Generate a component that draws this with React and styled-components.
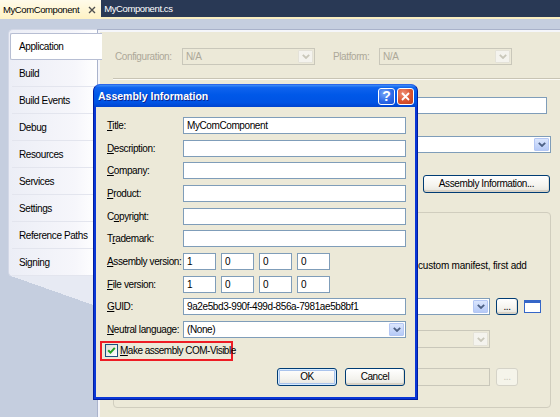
import React from "react";
import styled, { createGlobalStyle, css } from "styled-components";

const GlobalStyle = createGlobalStyle`
  *, *::before, *::after { box-sizing: border-box; }
  html, body { margin: 0; padding: 0; }
  body {
    width: 560px;
    height: 417px;
    overflow: hidden;
    background: #c5cedf;
    font-family: "Liberation Sans", Arial, sans-serif;
    font-size: 10px;
    letter-spacing: -0.4px;
    color: #000;
  }
`;

const Screen = styled.div`
  position: relative;
  width: 560px;
  height: 417px;
  overflow: hidden;
  display: flex;
  flex-direction: column;
`;

/* ---------- document tabs ---------- */

const DocTabs = styled.div`
  height: 19px;
  flex: none;
  display: flex;
  align-items: flex-start;
  background: #293955;
  border-bottom: 2px solid #f9eec2;
`;

const DocTab = styled.div`
  display: flex;
  align-items: center;
  gap: 9px;
  height: ${({ $active }) => ($active ? "19px" : "17px")};
  padding: 0 5px 0 3px;
  font-size: 9.5px;
  color: ${({ $active }) => ($active ? "#000" : "#fff")};
  background: ${({ $active }) =>
    $active ? "linear-gradient(#fffbea, #fff2c4)" : "transparent"};
`;

/* ---------- property page frame ---------- */

const Workspace = styled.div`
  flex: 1;
  display: flex;
  padding: 10px 0 0 8px;
  min-height: 0;
`;

const Sidebar = styled.nav`
  position: relative;
  z-index: 1;
  width: 89px;
  flex: none;
  align-self: flex-start;
  padding-top: 3px;
  background: linear-gradient(to right, #eceef6, #f6f6fb 75%, #ffffff);
  border: 1px solid #d3d8e7;
  border-right: none;
  border-radius: 5px 0 0 5px;

  &::after {
    content: "";
    position: absolute;
    left: 2px;
    top: 100%;
    width: 85px;
    height: 30px;
    background: linear-gradient(to top right, transparent 50%, #e7eaf3 50%);
  }
`;

const NavItem = styled.div`
  height: 27px;
  display: flex;
  align-items: center;
  padding-left: 7px;
  margin-left: 3px;
  border-bottom: 1px solid #e3e5ee;
  white-space: nowrap;

  ${({ $active }) =>
    $active &&
    css`
      margin-left: 1px;
      margin-right: -5px;
      padding-left: 8px;
      background: #fff;
      border: 1px solid #b7bed3;
      border-right: none;
      border-radius: 2px 0 0 2px;
    `}
`;

const Page = styled.main`
  flex: 1;
  min-width: 0;
  padding-left: 15px;
  background: #ece9d8;
  border-left: 1px solid #aab3cc;
  border-top: 1px solid #a9b2ca;
  box-shadow: inset 2px 2px 0 #f5f6fa;
`;

const ConfigRow = styled.div`
  display: flex;
  align-items: center;
  margin-top: 18px;
  padding-left: 2px;
  height: 17px;
  color: #aca899;
`;

const ConfigLabel = styled.span`
  width: ${({ $w }) => $w}px;
  flex: none;
`;

const Spacer = styled.span`
  width: ${({ $w }) => $w}px;
  flex: none;
`;

const Separator = styled.div`
  margin-top: 13px;
  border-top: 1px solid #c8c4b4;
  border-bottom: 1px solid #fbfaf5;
`;

const RightStack = styled.div`
  display: flex;
  flex-direction: column;
  align-items: flex-end;
  padding-right: 9px;
`;

const GroupBox = styled.section`
  margin: 19px 9px 0 0;
  padding: 47px 9px 21px 0;
  border: 1px solid #d0cdbe;
  border-radius: 4px;
`;

const Note = styled.p`
  margin: 0 0 26px;
  padding-left: 304px;
  line-height: 12px;
  letter-spacing: -0.2px;
  white-space: nowrap;
`;

const PickRow = styled.div`
  display: grid;
  grid-template-columns: 1fr 22px 17px;
  column-gap: 6px;
  align-items: center;
  margin-bottom: ${({ $gap }) => $gap}px;
`;

/* ---------- controls ---------- */

const TextBox = styled.div`
  height: ${({ $h }) => $h || 17}px;
  width: ${({ $w }) => ($w ? `${$w}px` : "auto")};
  margin-right: ${({ $mr }) => $mr || 0}px;
  justify-self: ${({ $w }) => ($w ? "end" : "stretch")};
  padding: 0 3px;
  line-height: 15px;
  white-space: nowrap;
  overflow: hidden;
  border: 1px solid ${({ $disabled }) => ($disabled ? "#c9c7ba" : "#7f9db9")};
  background: ${({ $disabled }) => ($disabled ? "#ece9d8" : "#fff")};
`;

const Combo = styled.div`
  display: flex;
  height: ${({ $h }) => $h || 17}px;
  width: ${({ $w }) => ($w ? `${$w}px` : "auto")};
  justify-self: ${({ $w }) => ($w ? "end" : "stretch")};
  padding: 1px;
  border: 1px solid ${({ $disabled }) => ($disabled ? "#c9c7ba" : "#7f9db9")};
  background: ${({ $disabled }) => ($disabled ? "#ece9d8" : "#fff")};
  color: ${({ $disabled }) => ($disabled ? "#aca899" : "#000")};
`;

const ComboText = styled.span`
  flex: 1;
  padding-left: 2px;
  line-height: 13px;
  white-space: nowrap;
  overflow: hidden;
`;

const DropButton = styled.span`
  width: 15px;
  flex: none;
  display: flex;
  align-items: center;
  justify-content: center;
  border-radius: 1px;
  border: 1px solid ${({ $disabled }) => ($disabled ? "#e4e2d8" : "#b4c7f4")};
  background: ${({ $disabled }) =>
    $disabled ? "#f4f3ee" : "linear-gradient(#dbe6fd, #b6caf7)"};
`;

const Chevron = ({ disabled }) => (
  <svg width="8" height="5" viewBox="0 0 8 5">
    <polyline
      points="0.8,0.8 4,4 7.2,0.8"
      fill="none"
      stroke={disabled ? "#c9c7ba" : "#4d6185"}
      strokeWidth="1.8"
    />
  </svg>
);

const DropDown = ({ value, disabled, w, h }) => (
  <Combo $disabled={disabled} $w={w} $h={h}>
    <ComboText>{value}</ComboText>
    <DropButton $disabled={disabled}>
      <Chevron disabled={disabled} />
    </DropButton>
  </Combo>
);

const Button = styled.button`
  height: ${({ $h }) => $h || 18}px;
  width: ${({ $w }) => $w}px;
  margin-right: ${({ $mr }) => $mr || 0}px;
  padding: 0;
  font: inherit;
  letter-spacing: inherit;
  line-height: 1;
  color: ${({ disabled }) => (disabled ? "#c9c7ba" : "#000")};
  border: 1px solid ${({ disabled }) => (disabled ? "#d5d3c8" : "#003c74")};
  border-radius: 3px;
  background: ${({ disabled }) =>
    disabled ? "#f5f4ea" : "linear-gradient(#ffffff, #f4f3ee 60%, #e6e5de)"};
  box-shadow: ${({ disabled, $default }) =>
    disabled
      ? "none"
      : $default
      ? "inset 0 0 0 1px #d6ebff, inset 0 0 0 2px #a9c3ec"
      : "inset 0 -2px 0 #d8d2c6, inset -1px 0 0 #e2dfd4"};
`;

const IconPreview = styled.span`
  width: 17px;
  height: 13px;
  border: 1px solid #3566c8;
  border-top-width: 3px;
  background: #fff;
`;

/* ---------- dialog ---------- */

const Dialog = styled.section`
  position: absolute;
  left: 93px;
  top: 84px;
  width: 325px;
  height: 316px;
  z-index: 5;
  display: flex;
  flex-direction: column;
  background: #0a37d6;
  border: 1px solid #001ea0;
  border-top-color: #2a66ea;
  border-radius: 7px 7px 0 0;
`;

const TitleBar = styled.header`
  height: 22px;
  flex: none;
  display: flex;
  align-items: center;
  padding: 0 3px 0 4px;
  border-radius: 6px 6px 0 0;
  background: linear-gradient(
    #3f8ef6 0%,
    #0f63ee 12%,
    #0058e8 45%,
    #0053e4 80%,
    #0044cf 100%
  );
  color: #fff;
  font-weight: bold;
  font-size: 10.5px;
  letter-spacing: 0;
  text-shadow: 1px 1px 0 #0b2590;
`;

const Caption = styled.span`
  flex: 1;
`;

const CaptionButton = styled.span`
  width: 17px;
  height: 17px;
  margin-left: 2px;
  display: flex;
  align-items: center;
  justify-content: center;
  border: 1px solid #fff;
  border-radius: 3px;
  font-size: 14px;
  text-shadow: none;
  background: ${({ $close }) =>
    $close
      ? "radial-gradient(circle at 35% 30%, #f0937a, #d9532f 55%, #c0401d)"
      : "radial-gradient(circle at 35% 30%, #76a4f8, #2d6ae8 55%, #1a50d4)"};
`;

const Client = styled.div`
  flex: 1;
  margin: 0 2px 2px;
  background: #ece9d8;
  display: flex;
  flex-direction: column;
`;

const Form = styled.div`
  display: grid;
  grid-template-columns: 76px 1fr;
  grid-auto-rows: 17px;
  row-gap: 5.67px;
  align-items: center;
  padding: 10px 9px 0 11px;
`;

const Label = styled.label`
  white-space: nowrap;
`;

const Versions = styled.div`
  display: flex;
  gap: 5px;
`;

const CheckRow = styled.div`
  display: flex;
  align-items: center;
  gap: 2px;
  width: 133px;
  height: 20px;
  margin: 3px 0 0 4px;
  padding-left: 3px;
  border: 2px solid #ee1c24;
  white-space: nowrap;
  letter-spacing: -0.5px;
`;

const CheckBox = styled.span`
  width: 13px;
  height: 13px;
  flex: none;
  display: flex;
  align-items: center;
  justify-content: center;
  border: 1px solid #1c5180;
  background: linear-gradient(135deg, #dcdcd5, #ffffff);
`;

const ButtonRow = styled.div`
  display: flex;
  justify-content: flex-end;
  gap: 8px;
  margin-top: 7px;
  padding-right: 10px;
`;

const fields = [
  { pre: "", key: "T", post: "itle:", value: "MyComComponent" },
  { pre: "", key: "D", post: "escription:", value: "" },
  { pre: "", key: "C", post: "ompany:", value: "" },
  { pre: "", key: "P", post: "roduct:", value: "" },
  { pre: "C", key: "o", post: "pyright:", value: "" },
  { pre: "T", key: "r", post: "ademark:", value: "" },
];

const navItems = [
  "Application",
  "Build",
  "Build Events",
  "Debug",
  "Resources",
  "Services",
  "Settings",
  "Reference Paths",
  "Signing",
];

const VersionBoxes = () => (
  <Versions>
    {["1", "0", "0", "0"].map((v, i) => (
      <TextBox key={i} $w={33}>
        {v}
      </TextBox>
    ))}
  </Versions>
);

const App = () => (
  <>
    <GlobalStyle />
    <Screen>
      <DocTabs>
        <DocTab $active>
          MyComComponent
          <svg width="8" height="8" viewBox="0 0 8 8">
            <path d="M1 1 L7 7 M7 1 L1 7" stroke="#505050" strokeWidth="1.4" />
          </svg>
        </DocTab>
        <DocTab>MyComponent.cs</DocTab>
      </DocTabs>

      <Workspace>
        <Sidebar>
          {navItems.map((item, i) => (
            <NavItem key={item} $active={i === 0}>
              {item}
            </NavItem>
          ))}
        </Sidebar>

        <Page>
          <ConfigRow>
            <ConfigLabel $w={67}>Configuration:</ConfigLabel>
            <DropDown value="N/A" disabled w={133} />
            <Spacer $w={18} />
            <ConfigLabel $w={46}>Platform:</ConfigLabel>
            <DropDown value="N/A" disabled w={133} />
          </ConfigRow>
          <Separator />

          <RightStack>
            <TextBox $w={220} $mr={4} style={{ marginTop: 17 }} />
            <div style={{ marginTop: 22 }}>
              <DropDown value="" w={220} />
            </div>
            <Button $w={127} $mr={1} style={{ marginTop: 22 }}>
              Assembly Information...
            </Button>
          </RightStack>

          <GroupBox>
            <Note>custom manifest, first add</Note>
            <PickRow $gap={15}>
              <DropDown value="" w={200} />
              <Button $w={22} $h={17}>...</Button>
              <IconPreview />
            </PickRow>
            <PickRow $gap={20}>
              <DropDown value="" disabled w={200} h={18} />
            </PickRow>
            <PickRow $gap={0}>
              <TextBox $disabled $w={200} $h={18} />
              <Button disabled $w={22}>...</Button>
            </PickRow>
          </GroupBox>
        </Page>
      </Workspace>

      <Dialog>
        <TitleBar>
          <Caption>Assembly Information</Caption>
          <CaptionButton>?</CaptionButton>
          <CaptionButton $close>
            <svg width="9" height="9" viewBox="0 0 9 9">
              <path d="M1 1 L8 8 M8 1 L1 8" stroke="#fff" strokeWidth="1.8" />
            </svg>
          </CaptionButton>
        </TitleBar>
        <Client>
          <Form>
            {fields.map((f) => (
              <React.Fragment key={f.post}>
                <Label>
                  {f.pre}
                  <u>{f.key}</u>
                  {f.post}
                </Label>
                <TextBox>{f.value}</TextBox>
              </React.Fragment>
            ))}
            <Label>
              <u>A</u>ssembly version:
            </Label>
            <VersionBoxes />
            <Label>
              <u>F</u>ile version:
            </Label>
            <VersionBoxes />
            <Label>
              <u>G</u>UID:
            </Label>
            <TextBox>9a2e5bd3-990f-499d-856a-7981ae5b8bf1</TextBox>
            <Label>
              <u>N</u>eutral language:
            </Label>
            <DropDown value="(None)" />
          </Form>

          <CheckRow>
            <CheckBox>
              <svg width="9" height="9" viewBox="0 0 9 9">
                <path
                  d="M1.2 4.2 L3.5 6.6 L7.8 1.8"
                  fill="none"
                  stroke="#21a121"
                  strokeWidth="2"
                />
              </svg>
            </CheckBox>
            <span>
              <u>M</u>ake assembly COM-Visible
            </span>
          </CheckRow>

          <ButtonRow>
            <Button $w={60} $default>
              OK
            </Button>
            <Button $w={60}>Cancel</Button>
          </ButtonRow>
        </Client>
      </Dialog>
    </Screen>
  </>
);

export default App;
